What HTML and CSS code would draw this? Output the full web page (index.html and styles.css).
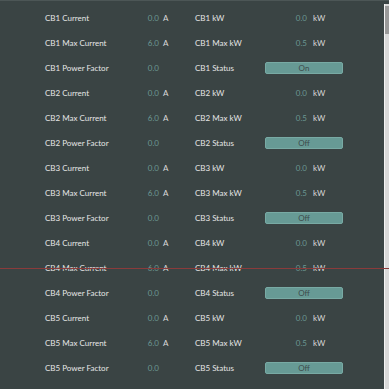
FILE: index.html
```html
<!DOCTYPE html>
<html>
<head>
<meta charset="utf-8">
<link rel="stylesheet" href="styles.css">
</head>
<body>
<div class="panel">
  <div class="grid">
    <div class="lbl">CB1 Current</div><div class="val">0.0</div><div class="unit">A</div>
    <div class="lbl">CB1 kW</div><div class="val">0.0</div><div class="unit unit-r">kW</div>

    <div class="lbl">CB1 Max Current</div><div class="val">6.0</div><div class="unit">A</div>
    <div class="lbl">CB1 Max kW</div><div class="val">0.5</div><div class="unit unit-r">kW</div>

    <div class="lbl">CB1 Power Factor</div><div class="val">0.0</div><div class="unit"></div>
    <div class="lbl">CB1 Status</div><div class="status"><span class="btn">On</span></div>

    <div class="lbl">CB2 Current</div><div class="val">0.0</div><div class="unit">A</div>
    <div class="lbl">CB2 kW</div><div class="val">0.0</div><div class="unit unit-r">kW</div>

    <div class="lbl">CB2 Max Current</div><div class="val">6.0</div><div class="unit">A</div>
    <div class="lbl">CB2 Max kW</div><div class="val">0.5</div><div class="unit unit-r">kW</div>

    <div class="lbl">CB2 Power Factor</div><div class="val">0.0</div><div class="unit"></div>
    <div class="lbl">CB2 Status</div><div class="status"><span class="btn">Off</span></div>

    <div class="lbl">CB3 Current</div><div class="val">0.0</div><div class="unit">A</div>
    <div class="lbl">CB3 kW</div><div class="val">0.0</div><div class="unit unit-r">kW</div>

    <div class="lbl">CB3 Max Current</div><div class="val">6.0</div><div class="unit">A</div>
    <div class="lbl">CB3 Max kW</div><div class="val">0.5</div><div class="unit unit-r">kW</div>

    <div class="lbl">CB3 Power Factor</div><div class="val">0.0</div><div class="unit"></div>
    <div class="lbl">CB3 Status</div><div class="status"><span class="btn">Off</span></div>

    <div class="lbl">CB4 Current</div><div class="val">0.0</div><div class="unit">A</div>
    <div class="lbl">CB4 kW</div><div class="val">0.0</div><div class="unit unit-r">kW</div>

    <div class="lbl">CB4 Max Current</div><div class="val">6.0</div><div class="unit">A</div>
    <div class="lbl">CB4 Max kW</div><div class="val">0.5</div><div class="unit unit-r">kW</div>

    <div class="lbl">CB4 Power Factor</div><div class="val">0.0</div><div class="unit"></div>
    <div class="lbl">CB4 Status</div><div class="status"><span class="btn">Off</span></div>

    <div class="lbl">CB5 Current</div><div class="val">0.0</div><div class="unit">A</div>
    <div class="lbl">CB5 kW</div><div class="val">0.0</div><div class="unit unit-r">kW</div>

    <div class="lbl">CB5 Max Current</div><div class="val">6.0</div><div class="unit">A</div>
    <div class="lbl">CB5 Max kW</div><div class="val">0.5</div><div class="unit unit-r">kW</div>

    <div class="lbl">CB5 Power Factor</div><div class="val">0.0</div><div class="unit"></div>
    <div class="lbl">CB5 Status</div><div class="status"><span class="btn">Off</span></div>
  </div>
  <div class="scrollbar"><div class="thumb"></div></div>
  <div class="redline"></div>
</div>
</body>
</html>
```

FILE: styles.css
```css
html, body {
  margin: 0;
  padding: 0;
  background: #3a4444;
}
body {
  width: 389px;
  height: 389px;
  overflow: hidden;
  font-family: "Lato", "Liberation Sans", sans-serif;
  font-size: 8px;
}
.panel {
  position: relative;
  width: 389px;
  height: 389px;
  box-sizing: border-box;
  border-top: 1px solid #4c5656;
  display: flex;
}
.grid {
  display: grid;
  grid-template-columns: 80px 34px 36px 70px 42px 76px;
  grid-auto-rows: 25px;
  align-items: center;
  padding: 4px 0 0 45px;
  flex: 1;
}
.lbl {
  color: #e6e6e6;
  white-space: nowrap;
}
.val {
  color: #6c9893;
  text-align: right;
}
.unit {
  color: #dadada;
  padding-left: 4px;
}
.unit-r {
  padding-left: 6px;
}
.status {
  grid-column: span 2;
  display: flex;
}
.btn {
  width: 76px;
  height: 10px;
  line-height: 10px;
  background: #679a95;
  border: 1px solid #78aaa4;
  border-radius: 2px;
  color: #3e4c4c;
  text-align: center;
}
.scrollbar {
  width: 4px;
  margin-top: 3px;
  border-left: 1px solid #f4f4f4;
  background: #d9d9d9;
  display: flex;
  flex-direction: column;
}
.thumb {
  height: 28px;
  margin-top: 2px;
  background: #9a9a9a;
}
.redline {
  position: absolute;
  left: 0;
  right: 0;
  top: 267px;
  height: 1px;
  background: #8a3b3b;
}
```
